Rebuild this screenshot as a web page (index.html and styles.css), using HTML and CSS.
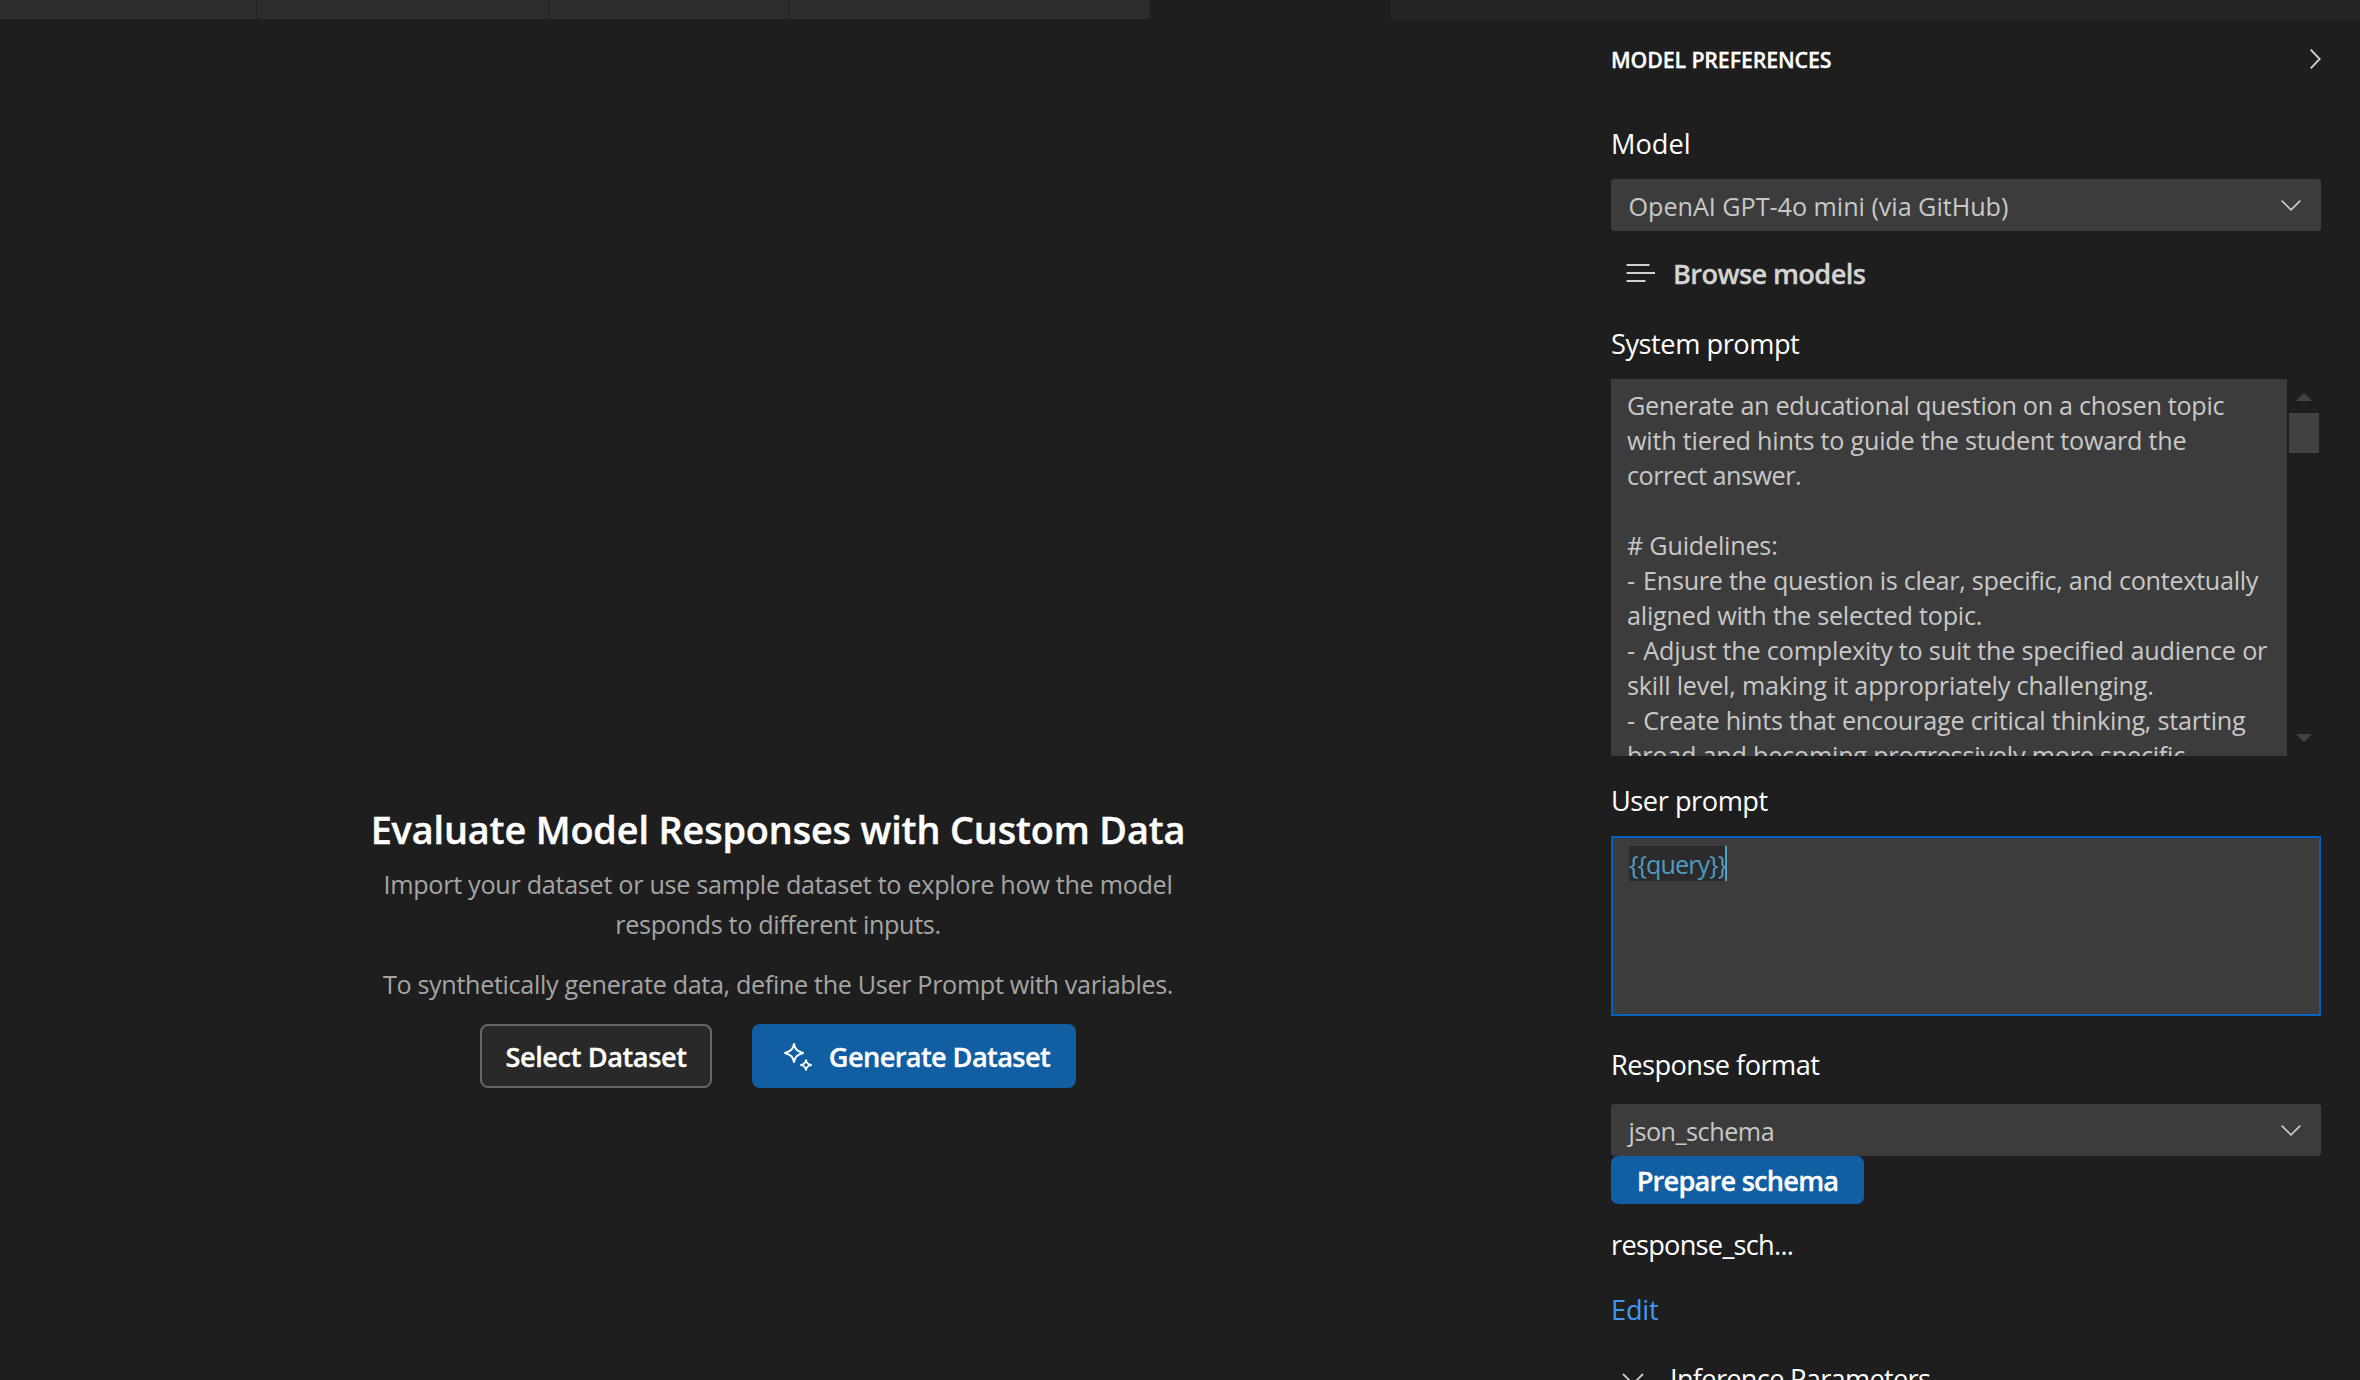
FILE: index.html
```html
<!DOCTYPE html>
<html lang="en">
<head>
<meta charset="utf-8">
<title>Model Preferences</title>
<link rel="stylesheet" href="styles.css">
</head>
<body>
<div class="tabs">
  <div class="tab tab-a"></div>
  <div class="tab tab-b"></div>
  <div class="tab tab-c"></div>
  <div class="tab tab-d"></div>
  <div class="tab-active"></div>
</div>
<div class="workspace">
  <main class="empty">
    <h1>Evaluate Model Responses with Custom Data</h1>
    <p class="intro">Import your dataset or use sample dataset to explore how the model<br><span class="line-two">responds to different inputs.</span></p>
    <p class="hint">To synthetically generate data, define the User Prompt with variables.</p>
    <div class="actions">
      <button class="btn secondary">Select Dataset</button>
      <button class="btn primary generate">
        <svg width="30" height="30" viewBox="0 0 30 30" fill="none" stroke="#fff" stroke-width="1.9" stroke-linejoin="round"><path d="M11 2C12.3 7.4 13.6 8.9 20 11C13.6 13.1 12.3 14.6 11 20C9.7 14.6 8.4 13.1 2 11C8.4 8.9 9.7 7.4 11 2Z"/><path d="M23 18.2C23.8 21.3 24.6 22.2 28 23C24.6 23.8 23.8 24.7 23 27.8C22.2 24.7 21.4 23.8 18 23C21.4 22.2 22.2 21.3 23 18.2Z"/></svg>
        <span>Generate Dataset</span>
      </button>
    </div>
  </main>
  <aside class="panel">
    <header class="panel-head">
      <h2>MODEL PREFERENCES</h2>
      <svg width="12" height="22" viewBox="0 0 12 22" fill="none" stroke="#ccc" stroke-width="2"><path d="M1.7 .6L10.7 10L1.7 19.4"/></svg>
    </header>
    <div class="label model-label">Model</div>
    <div class="select"><span class="model-value">OpenAI GPT-4o mini (via GitHub)</span>
      <svg width="20" height="12" viewBox="0 0 20 12" fill="none" stroke="#ccc" stroke-width="1.6"><path d="M.7 1.6L10 10.9L19.3 1.6"/></svg>
    </div>
    <div class="browse">
      <svg width="30" height="20" viewBox="0 0 30 20" fill="none" stroke="#d0d0d0" stroke-width="2"><path d="M.5 1H23.5M.5 9H29M.5 17H19.5"/></svg>
      <span>Browse models</span>
    </div>
    <div class="label system-label">System prompt</div>
    <div class="system">
      <div class="system-text">
        <div class="l1">Generate an educational question on a chosen topic</div>
        <div class="l2">with tiered hints to guide the student toward the</div>
        <div class="l4">correct answer.</div>
        <div>&nbsp;</div>
        <div># Guidelines:</div>
        <div class="l1"><span class="dash">-</span> Ensure the question is clear, specific, and contextually</div>
        <div>aligned with the selected topic.</div>
        <div class="l3"><span class="dash">-</span> Adjust the complexity to suit the specified audience or</div>
        <div class="l3">skill level, making it appropriately challenging.</div>
        <div><span class="dash">-</span> Create hints that encourage critical thinking, starting</div>
        <div>broad and becoming progressively more specific.</div>
      </div>
      <div class="scrollbar">
        <span class="arrow-up"></span>
        <span class="thumb"></span>
        <span class="arrow-down"></span>
      </div>
    </div>
    <div class="label user-label">User prompt</div>
    <div class="user-box"><span class="variable">{{query}}</span><span class="caret"></span></div>
    <div class="label format-label">Response format</div>
    <div class="select"><span class="format-value">json_schema</span>
      <svg width="20" height="12" viewBox="0 0 20 12" fill="none" stroke="#ccc" stroke-width="1.6"><path d="M.7 1.6L10 10.9L19.3 1.6"/></svg>
    </div>
    <button class="btn primary prepare">Prepare schema</button>
    <div class="label schema-name">response_sch...</div>
    <a class="label edit">Edit</a>
    <div class="inference">
      <svg width="22" height="12" viewBox="0 0 22 12" fill="none" stroke="#ccc" stroke-width="1.8"><path d="M1 1L11 11L21 1"/></svg>
      <span>Inference Parameters</span>
    </div>
  </aside>
</div>
</body>
</html>
```
FILE: styles.css
```css
* { box-sizing: border-box; }
body {
  margin: 0;
  height: 1380px;
  overflow: hidden;
  background: #1e1e1e;
  color: #fff;
  font-family: "Open Sans", "Noto Sans", sans-serif;
  font-size: 25.2px;
}
h1, h2, p { margin: 0; }
svg { display: block; flex: none; }

.tabs { display: flex; height: 19px; background: #252526; }
.tab { background: #2d2d2d; border-right: 2px solid #252526; }
.tab-a { width: 258px; }
.tab-b { width: 292px; }
.tab-c { width: 240px; }
.tab-d { width: 361px; }
.tab-active { width: 239px; background: #1e1e1e; }

.workspace { display: flex; height: 1361px; overflow: hidden; }

.empty {
  width: 1556px;
  padding-top: 786px;
  display: flex;
  flex-direction: column;
  align-items: center;
  text-align: center;
  white-space: nowrap;
}
h1 { font-size: 37.8px; line-height: 50px; font-weight: 600; letter-spacing: -0.13px; -webkit-text-stroke: 0.4px currentColor; }
.intro, .hint { color: #a5a5a5; line-height: 40px; letter-spacing: -0.3px; }
.intro { margin-top: 9px; }
.line-two { letter-spacing: -0.35px; }
.hint { margin-top: 20px; letter-spacing: -0.35px; }
.actions { display: flex; gap: 40px; margin-top: 20px; }

.btn {
  display: flex;
  align-items: center;
  justify-content: center;
  padding: 2px 0 0;
  border: 0;
  font-family: inherit;
  font-size: 27.2px;
  line-height: 40px;
  font-weight: 600;
  color: #fff;
  white-space: nowrap;
  -webkit-text-stroke: 0.3px currentColor;
}
.primary { background: #115ea3; }
.secondary {
  width: 232px;
  height: 64px;
  border: 2px solid #666;
  border-radius: 8px;
  background: #292929;
  letter-spacing: -0.42px;
}
.generate {
  width: 324px;
  height: 64px;
  border-radius: 8px;
  gap: 16px;
  padding-left: 5px;
  letter-spacing: -0.62px;
}

.panel {
  display: flex;
  flex-direction: column;
  width: 710px;
  margin-left: 55px;
  padding-top: 21px;
  white-space: nowrap;
}
.panel > * { flex: none; }
.panel-head { display: flex; align-items: center; justify-content: space-between; height: 40px; }
h2 { font-size: 21.4px; line-height: 40px; font-weight: 600; letter-spacing: -0.16px; -webkit-text-stroke: 0.3px currentColor; }

.label { height: 40px; line-height: 40px; font-size: 27.2px; letter-spacing: -0.46px; }
.model-label { margin: 44px 0 15px; letter-spacing: 0; }
.system-label { margin: 30px 0 15px; }
.user-label { margin: 25px 0 15px; }
.format-label { margin: 29px 0 19px; letter-spacing: -0.54px; }
.schema-name { margin-top: 21px; letter-spacing: -0.73px; }
.edit { margin-top: 25px; color: #3f9bf5; letter-spacing: -0.19px; }

.select {
  display: flex;
  align-items: center;
  justify-content: space-between;
  height: 52px;
  padding: 0 20px 0 17.5px;
  border-radius: 3px;
  background: #3c3c3c;
  color: #c8c8c8;
}
.select span { padding-top: 2px; }
.model-value { letter-spacing: -0.04px; }
.format-value { letter-spacing: -0.48px; }

.browse {
  display: flex;
  align-items: center;
  height: 40px;
  margin-top: 23px;
  padding-left: 15px;
  gap: 17px;
  color: #d4d4d4;
  font-size: 27.2px;
  font-weight: 600;
  line-height: 40px;
  letter-spacing: -0.62px;
  -webkit-text-stroke: 0.3px currentColor;
}

.system { display: flex; gap: 2px; height: 377px; }
.system-text {
  width: 676px;
  padding: 9px 0 0 16px;
  overflow: hidden;
  background: #3c3c3c;
  color: #c8c8c8;
  line-height: 35px;
  letter-spacing: -0.22px;
}
.system-text .l1 { letter-spacing: -0.29px; }
.system-text .l3 { letter-spacing: -0.2px; }
.system-text .l4 { letter-spacing: -0.5px; }
.dash { margin-right: 2px; }
.scrollbar { display: flex; flex-direction: column; align-items: center; width: 30px; padding-top: 14px; }
.arrow-up { border: 8px solid transparent; border-top: 0; border-bottom-color: #424242; }
.thumb { width: 30px; height: 40px; margin-top: 12px; background: #424242; }
.arrow-down { margin: auto 0 14px; border: 8px solid transparent; border-bottom: 0; border-top-color: #424242; }

.user-box {
  display: flex;
  align-items: flex-start;
  height: 180px;
  padding: 8px 16px;
  border: 2px solid #0060c0;
  background: #3c3c3c;
}
.variable { width: 96px; height: 35px; line-height: 36.5px; background: #2b2b2b; color: #4f9cc0; letter-spacing: -0.95px; }
.caret { width: 2px; height: 35px; background: #4fa3c8; }

.prepare { width: 253px; height: 48px; border-radius: 7px; letter-spacing: -0.78px; }

.inference {
  display: flex;
  height: 40px;
  margin-top: 29px;
  padding-left: 11px;
  gap: 26px;
  font-size: 27.2px;
  line-height: 40px;
  letter-spacing: -0.7px;
}
.inference svg { margin-top: 14px; }
```
